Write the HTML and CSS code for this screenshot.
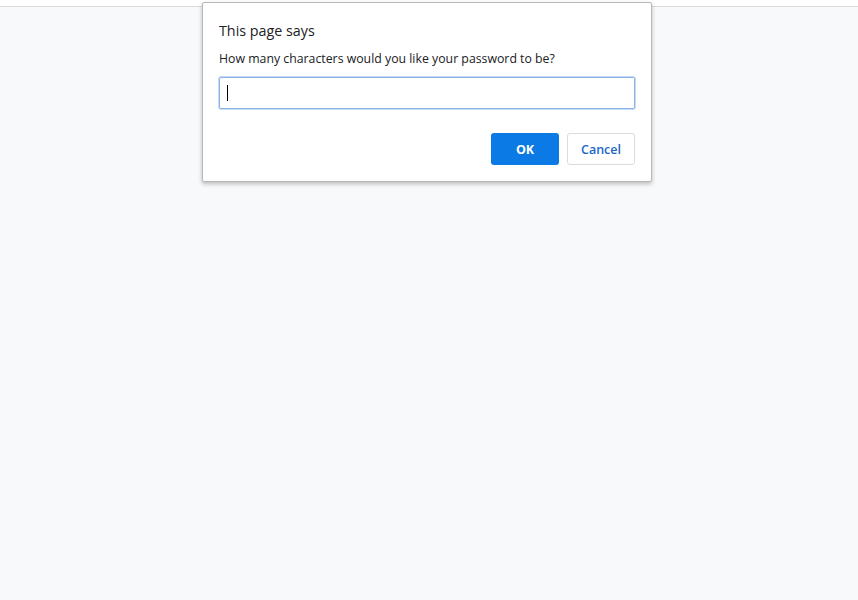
FILE: index.html
```html
<!DOCTYPE html>
<html>
<head>
<meta charset="utf-8">
<link rel="stylesheet" href="styles.css">
</head>
<body>
<div class="topbar"></div>
<div class="page">
  <div class="dialog">
    <div class="title">This page says</div>
    <div class="message">How many characters would you like your password to be?</div>
    <div class="field"><span class="caret"></span></div>
    <div class="actions">
      <button class="btn ok">OK</button>
      <button class="btn cancel">Cancel</button>
    </div>
  </div>
</div>
</body>
</html>
```

FILE: styles.css
```css
html, body {
  margin: 0;
  padding: 0;
  height: 100%;
}
body {
  background: #f8f9fa;
  font-family: "Open Sans", "Noto Sans", sans-serif;
  color: #202124;
  position: relative;
}
.topbar {
  height: 6px;
  background: #ffffff;
  border-bottom: 1px solid #dadce0;
}
.dialog {
  position: absolute;
  left: 202px;
  top: 2px;
  width: 416px;
  padding: 0 16px 16px 16px;
  background: #ffffff;
  border: 1px solid #b8b8b8;
  border-radius: 2px;
  box-shadow: 0 2px 4px rgba(0,0,0,0.25);
}
.title {
  font-size: 14.3px;
  margin-top: 18px;
  line-height: 20px;
  color: #202124;
}
.message {
  font-size: 12.3px;
  line-height: 18px;
  margin-top: 9px;
  color: #202124;
}
.field {
  margin-top: 9px;
  height: 30px;
  border: 1px solid #8ab4e8;
  border-radius: 2px;
  box-shadow: 0 0 0 1px #c7dbf3;
  display: flex;
  align-items: center;
  padding-left: 7px;
}
.caret {
  width: 1px;
  height: 16px;
  background: #000;
}
.actions {
  display: flex;
  justify-content: flex-end;
  gap: 8px;
  margin-top: 24px;
}
.btn {
  width: 68px;
  height: 32px;
  border-radius: 3px;
  font-family: "Open Sans", "Noto Sans", sans-serif;
  font-size: 12.5px;
  font-weight: 600;
  cursor: pointer;
}
.ok {
  background: #0b7ae5;
  color: #ffffff;
  border: none;
  font-weight: 700;
}
.cancel {
  background: #ffffff;
  color: #1a67c6;
  border: 1px solid #dadce0;
}
```
